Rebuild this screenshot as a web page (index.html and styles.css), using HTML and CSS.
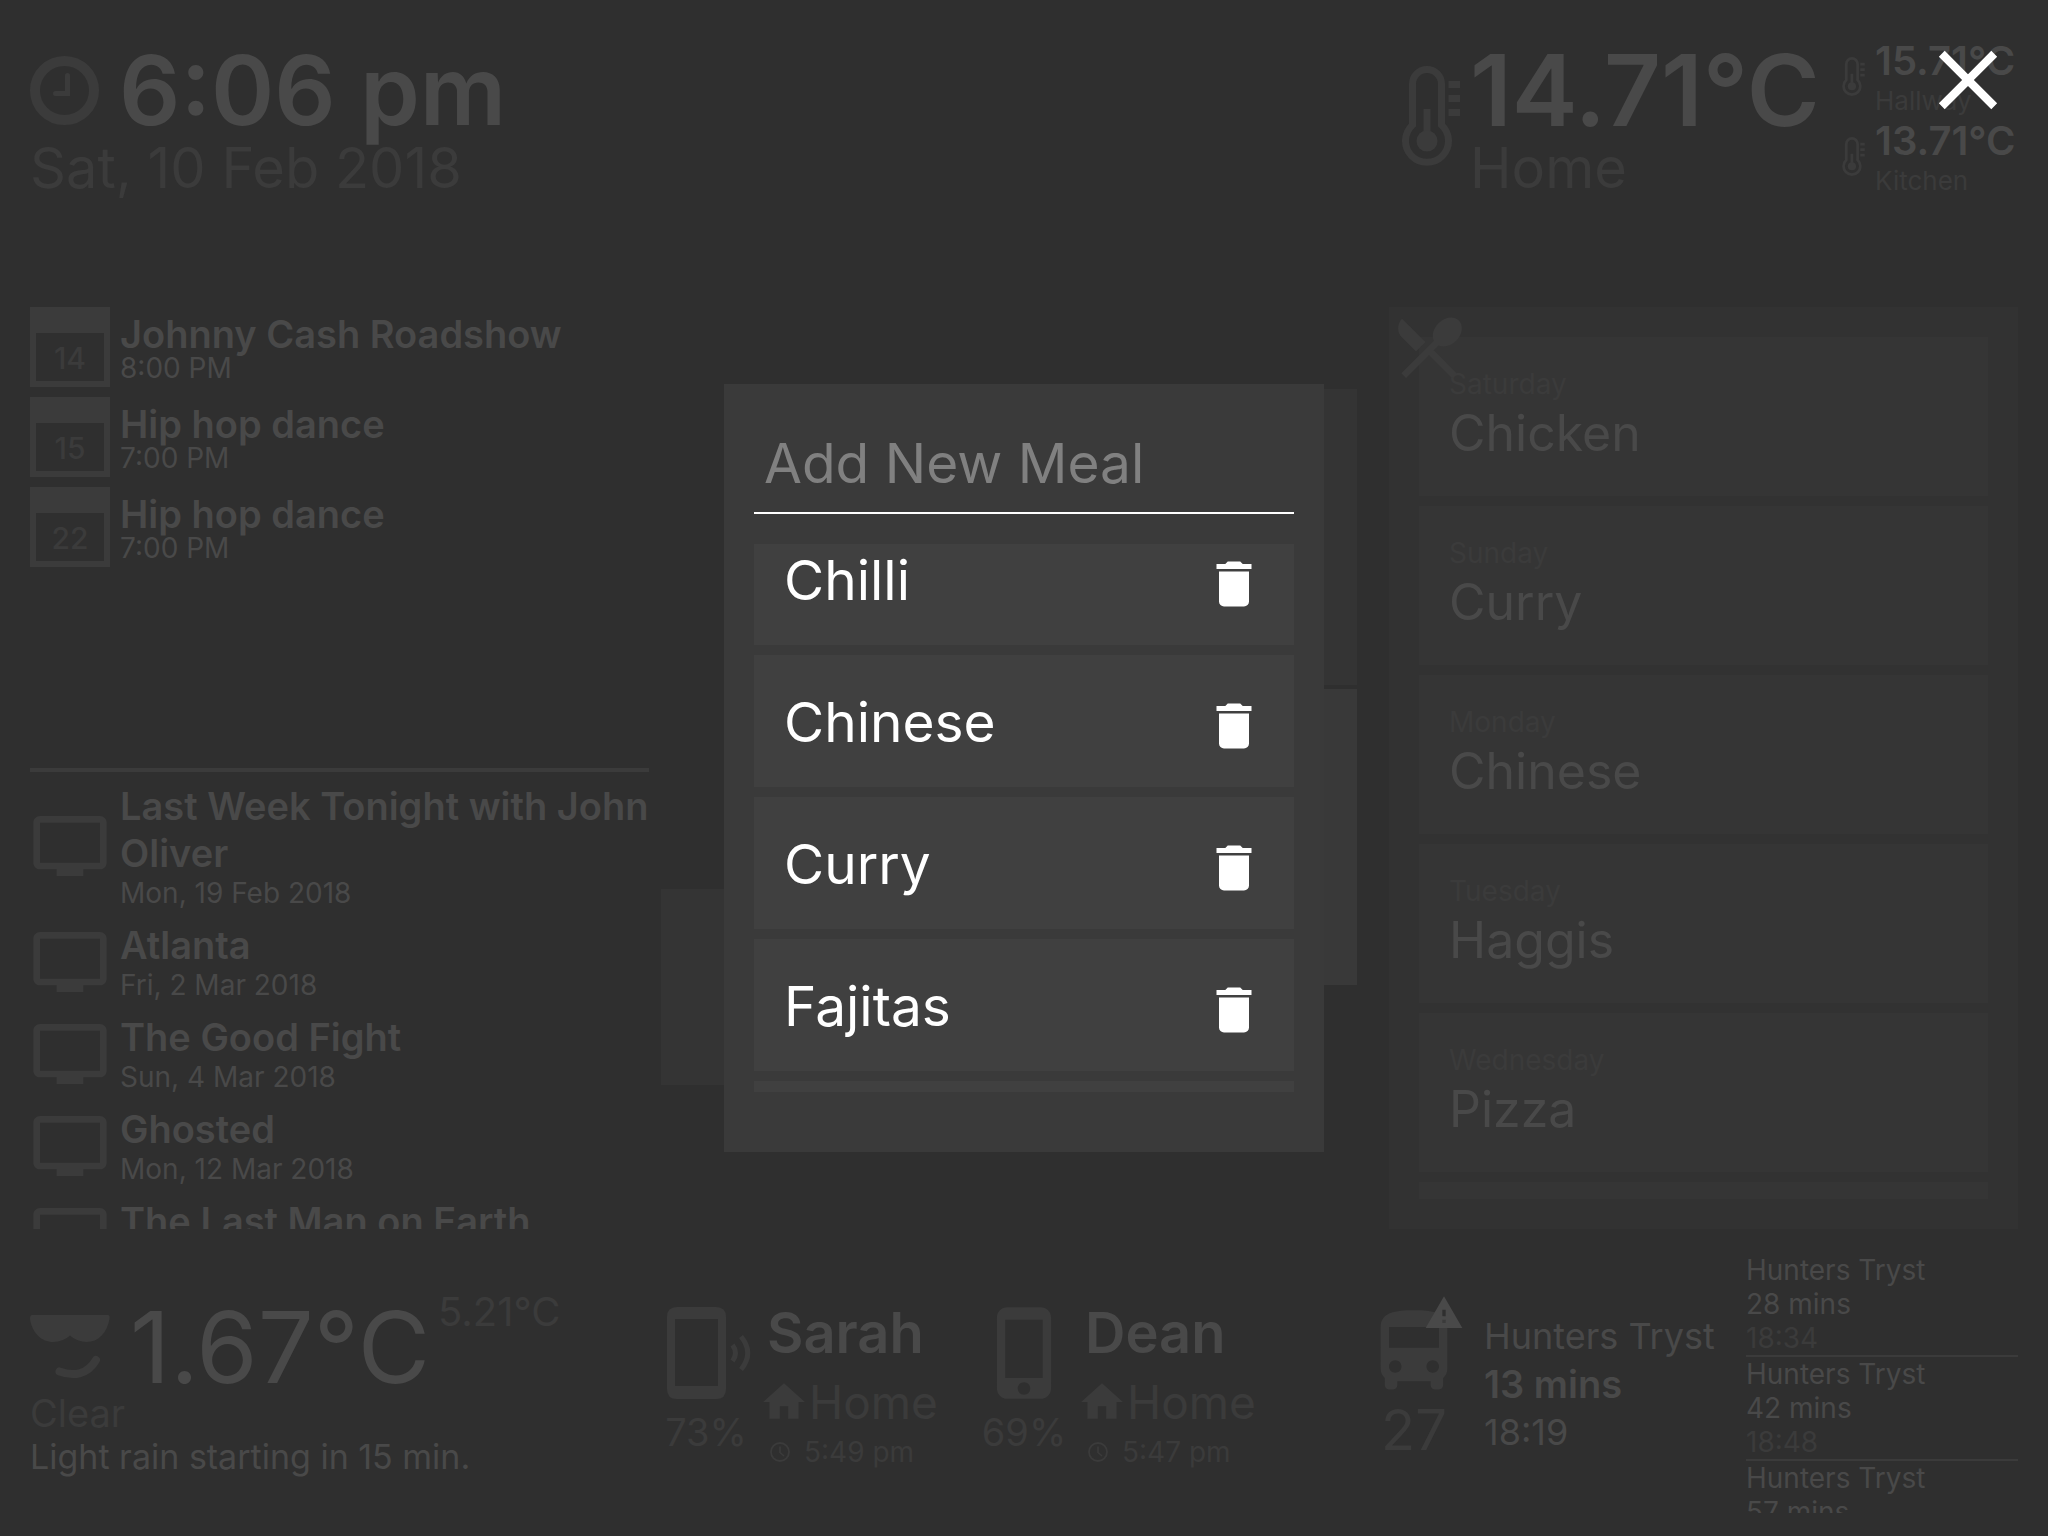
FILE: index.html
```html
<!DOCTYPE html>
<html lang="en">
<head>
<meta charset="utf-8">
<meta name="viewport" content="width=device-width, initial-scale=1">
<title>Home dashboard</title>
<link rel="stylesheet" href="styles.css">
</head>
<body>
<svg class="sprite" aria-hidden="true">
  <symbol id="thermometer" viewBox="0 0 58 100">
    <path d="M10.5 59V18a14.5 14.5 0 0 1 29 0V59A21.5 21.5 0 1 1 10.5 59Z" fill="none" stroke="currentColor" stroke-width="7"/>
    <path d="M21.500 43h7v24h-7z"/><circle cx="25" cy="75" r="10.500"/>
    <path d="M46.500 15H58v7H46.500zM46.500 29H58v7H46.500zM46.500 43H58v7H46.500z"/>
  </symbol>
  <symbol id="tv" viewBox="0 0 24 24"><path d="M21 3H3c-1.100 0-2 .9-2 2v12c0 1.100.9 2 2 2h5v2h8v-2h5c1.100 0 2-.9 2-2V5c0-1.100-.9-2-2-2zm0 14H3V5h18v12z"/></symbol>
  <symbol id="home" viewBox="0 0 24 24"><path d="M10 20v-6h4v6h5v-8h3L12 3 2 12h3v8z"/></symbol>
  <symbol id="clock-small" viewBox="0 0 24 24"><circle cx="12" cy="12" r="9" fill="none" stroke="currentColor" stroke-width="1.800"/><path d="M12 6.500V12.500L16 16" fill="none" stroke="currentColor" stroke-width="1.600"/></symbol>
  <symbol id="trash" viewBox="0 0 24 24"><path d="M19,4H15.500L14.500,3H9.500L8.500,4H5V6H19M6,19A2,2 0 0,0 8,21H16A2,2 0 0,0 18,19V7H6V19Z"/></symbol>
</svg>

<div class="dashboard">
  <header class="top">
    <section class="now">
      <div class="now-row">
        <svg class="icon now-icon" viewBox="0 0 69 69"><circle cx="34.500" cy="34.500" r="29.500" fill="none" stroke="currentColor" stroke-width="10"/><path d="M37.500 19.500V37.500H25.500" fill="none" stroke="currentColor" stroke-width="5" stroke-linecap="round"/></svg>
        <time class="huge strong">6:06 pm</time>
      </div>
      <div class="large dim">Sat, 10 Feb 2018</div>
    </section>
    <section class="climate">
      <div class="climate-main">
        <svg class="icon thermo"><use href="#thermometer"/></svg>
        <div class="climate-main-text">
          <div class="huge huge-temp strong">14.71°C</div>
          <div class="large dim">Home</div>
        </div>
      </div>
      <div class="climate-rooms">
        <div class="room"><svg class="icon thermo-small"><use href="#thermometer"/></svg><div><div class="room-value">15.71°C</div><div class="room-name">Hallway</div></div></div>
        <div class="room"><svg class="icon thermo-small"><use href="#thermometer"/></svg><div><div class="room-value">13.71°C</div><div class="room-name">Kitchen</div></div></div>
      </div>
    </section>
  </header>

  <main class="middle">
    <section class="agenda">
      <ul class="events">
        <li class="event"><span class="event-day">14</span><div class="event-text"><div class="title">Johnny Cash Roadshow</div><div class="event-time">8:00 PM</div></div></li>
        <li class="event"><span class="event-day">15</span><div class="event-text"><div class="title">Hip hop dance</div><div class="event-time">7:00 PM</div></div></li>
        <li class="event"><span class="event-day">22</span><div class="event-text"><div class="title">Hip hop dance</div><div class="event-time">7:00 PM</div></div></li>
      </ul>
      <ul class="shows">
        <li class="show"><svg class="icon show-icon"><use href="#tv"/></svg><div><div class="title">Last Week Tonight with John Oliver</div><div class="show-date">Mon, 19 Feb 2018</div></div></li>
        <li class="show"><svg class="icon show-icon"><use href="#tv"/></svg><div><div class="title">Atlanta</div><div class="show-date">Fri, 2 Mar 2018</div></div></li>
        <li class="show"><svg class="icon show-icon"><use href="#tv"/></svg><div><div class="title">The Good Fight</div><div class="show-date">Sun, 4 Mar 2018</div></div></li>
        <li class="show"><svg class="icon show-icon"><use href="#tv"/></svg><div><div class="title">Ghosted</div><div class="show-date">Mon, 12 Mar 2018</div></div></li>
        <li class="show"><svg class="icon show-icon"><use href="#tv"/></svg><div><div class="title">The Last Man on Earth</div><div class="show-date">Sun, 18 Mar 2018</div></div></li>
      </ul>
    </section>

    <section class="tiles">
      <div class="tile-column tile-column-left"><div class="tile tile-short"></div></div>
      <div class="tile-column"><div class="tile"></div><div class="tile tile-on"></div></div>
    </section>

    <section class="menu">
      <svg class="icon menu-icon" viewBox="0 0 24 24"><path d="M8.100 13.340l2.830-2.830L3.910 3.500c-1.560 1.560-1.560 4.090 0 5.660l4.190 4.180zm6.780-1.810c1.530.71 3.680.21 5.270-1.380 1.910-1.910 2.280-4.650.81-6.120-1.460-1.460-4.200-1.100-6.120.81-1.590 1.590-2.090 3.740-1.380 5.270L3.700 19.870l1.410 1.410L12 14.410l6.880 6.880 1.410-1.410L13.410 13l1.470-1.470z"/></svg>
      <ul class="meals">
        <li class="meal"><div class="meal-day">Saturday</div><div class="meal-name">Chicken</div></li>
        <li class="meal"><div class="meal-day">Sunday</div><div class="meal-name">Curry</div></li>
        <li class="meal"><div class="meal-day">Monday</div><div class="meal-name">Chinese</div></li>
        <li class="meal"><div class="meal-day">Tuesday</div><div class="meal-name">Haggis</div></li>
        <li class="meal"><div class="meal-day">Wednesday</div><div class="meal-name">Pizza</div></li>
        <li class="meal"></li>
      </ul>
    </section>
  </main>

  <footer class="bottom">
    <section class="weather">
      <div class="weather-row">
        <svg class="icon weather-icon" viewBox="0 0 80 64"><path d="M2 0H78Q80 0 79.500 4C77 18 68 27 57 27Q47 27 40 20.500Q33 27 23 27C12 27 2 18 0 4Q0 0 2 0Z"/><path d="M29.500 56.500C44 62 58 59 66 45" fill="none" stroke="currentColor" stroke-width="8" stroke-linecap="round"/></svg>
        <div class="huge huge-temp weather-temp">1.67°C</div>
        <div class="weather-feels">5.21°C</div>
      </div>
      <div class="weather-state">Clear</div>
      <div class="weather-note">Light rain starting in 15 min.</div>
    </section>

    <section class="people">
      <article class="person">
        <div class="person-device">
          <svg class="icon device" viewBox="0 0 100 100"><path fill-rule="evenodd" d="M21 4H60Q70 4 70 14V86Q70 96 60 96H21Q11 96 11 86V14Q11 4 21 4ZM19 16V83H62V16Z"/><path d="M76.500 42Q82.500 50 76.500 58M85 33.500Q98.500 50 85 66.500" fill="none" stroke="currentColor" stroke-width="5"/></svg>
          <div class="battery">73%</div>
        </div>
        <div class="person-text">
          <h2 class="person-name">Sarah</h2>
          <div class="person-place"><svg class="icon place-icon"><use href="#home"/></svg>Home</div>
          <div class="person-seen"><svg class="icon seen-icon"><use href="#clock-small"/></svg>5:49 pm</div>
        </div>
      </article>
      <article class="person">
        <div class="person-device">
          <svg class="icon device" viewBox="-.5 0 24 24"><path d="M15.500 1h-8C6.120 1 5 2.120 5 3.500v17C5 21.880 6.120 23 7.500 23h8c1.380 0 2.500-1.120 2.500-2.500v-17C18 2.120 16.880 1 15.500 1zm-4 21c-.83 0-1.500-.67-1.500-1.500s.67-1.500 1.500-1.500 1.500.67 1.500 1.500-.67 1.500-1.500 1.500zm4.500-4H7V4h9v14z"/></svg>
          <div class="battery">69%</div>
        </div>
        <div class="person-text">
          <h2 class="person-name">Dean</h2>
          <div class="person-place"><svg class="icon place-icon"><use href="#home"/></svg>Home</div>
          <div class="person-seen"><svg class="icon seen-icon"><use href="#clock-small"/></svg>5:47 pm</div>
        </div>
      </article>
    </section>

    <section class="transit">
      <div class="bus">
        <svg class="icon bus-icon" viewBox="0 0 24 24"><path d="M4 16c0 .88.39 1.670 1 2.220V20c0 .55.45 1 1 1h1c.55 0 1-.45 1-1v-1h8v1c0 .55.45 1 1 1h1c.55 0 1-.45 1-1v-1.780c.61-.55 1-1.340 1-2.220V6c0-3.500-3.580-4-8-4s-8 .5-8 4v10zm3.500 1c-.83 0-1.500-.67-1.500-1.500S6.670 14 7.500 14s1.500.67 1.500 1.500S8.330 17 7.500 17zm9 0c-.83 0-1.500-.67-1.500-1.500s.67-1.500 1.500-1.500 1.500.67 1.500 1.500-.67 1.500-1.500 1.500zm1.500-6H6V6h12v5z"/></svg>
        <svg class="icon bus-alert" viewBox="0 0 24 24"><path d="M1 21h22L12 2 1 21zm12-3h-2v-2h2v2zm0-4h-2v-4h2v4z"/></svg>
        <div class="bus-number">27</div>
      </div>
      <div class="next-bus">
        <div>Hunters Tryst</div>
        <div class="strong">13 mins</div>
        <div>18:19</div>
      </div>
      <ul class="departures">
        <li class="departure"><div>Hunters Tryst</div><div>28 mins</div><div class="dim">18:34</div></li>
        <li class="departure"><div>Hunters Tryst</div><div>42 mins</div><div class="dim">18:48</div></li>
        <li class="departure"><div>Hunters Tryst</div><div>57 mins</div><div class="dim">19:03</div></li>
      </ul>
    </section>
  </footer>
</div>

<div class="overlay">
  <button class="close" type="button" aria-label="Close"><svg class="icon" viewBox="0 0 24 24"><path d="M19,6.410L17.590,5L12,10.590L6.410,5L5,6.410L10.590,12L5,17.590L6.410,19L12,13.410L17.590,19L19,17.590L13.410,12L19,6.410Z"/></svg></button>
  <div class="modal" role="dialog" aria-label="Meals">
    <input class="new-meal" type="text" placeholder="Add New Meal" aria-label="Add New Meal">
    <ul class="options">
      <li class="option">Chilli<button class="delete" type="button" aria-label="Delete Chilli"><svg class="icon"><use href="#trash"/></svg></button></li>
      <li class="option">Chinese<button class="delete" type="button" aria-label="Delete Chinese"><svg class="icon"><use href="#trash"/></svg></button></li>
      <li class="option">Curry<button class="delete" type="button" aria-label="Delete Curry"><svg class="icon"><use href="#trash"/></svg></button></li>
      <li class="option">Fajitas<button class="delete" type="button" aria-label="Delete Fajitas"><svg class="icon"><use href="#trash"/></svg></button></li>
      <li class="option"></li>
    </ul>
  </div>
</div>
</body>
</html>
```
FILE: styles.css
```css
:root {
  --bg: #2f2f2f;
  --text: #494949;
  --dim: #3b3b3b;
}

* { box-sizing: border-box; }

body {
  margin: 0;
  background: var(--bg);
  color: var(--text);
  font-family: Inter, "Liberation Sans", sans-serif;
  font-size: 28px;
  line-height: 34px;
}

ul { margin: 0; padding: 0; list-style: none; }
button { border: 0; padding: 0; background: none; color: inherit; display: block; cursor: pointer; }

.sprite { position: absolute; width: 0; height: 0; }
.icon { display: block; flex: none; width: 100%; height: 100%; fill: currentColor; color: var(--dim); }

.dashboard {
  display: grid;
  grid-template-rows: minmax(0, 1fr) minmax(0, 3fr) minmax(0, 1fr);
  height: 100vh;
  padding: 0 30px;
}

.huge { font-size: 96px; line-height: 90px; white-space: nowrap; }
.huge-temp { font-size: 99px; }
.large { font-size: 56px; line-height: 66px; }
.strong { font-weight: 600; }
.dim { color: var(--dim); }
.title { font-size: 38px; line-height: 47px; font-weight: 600; }

/* Header */
.top { display: flex; justify-content: space-between; padding-top: 39px; }
.now { padding-top: 6px; }
.now-row { display: flex; gap: 20px; }
.now-icon { width: 69px; height: 69px; margin-top: 11px; }
.climate { display: flex; gap: 18px; }
.climate-main { display: flex; gap: 10px; padding-top: 6px; }
.climate-main-text { width: 354px; }
.thermo { width: 58px; height: 100px; margin-top: 21px; }
.room { display: flex; gap: 10px; }
.thermo-small { width: 23px; height: 39px; margin-top: 18px; }
.room-value { width: 143px; font-size: 40px; line-height: 44px; font-weight: 600; }
.room-name { font-size: 26px; line-height: 36px; color: var(--dim); }

/* Main area */
.middle { display: grid; grid-template-columns: 619fr 716fr 629fr; grid-template-rows: minmax(0, 1fr); gap: 12px; }
.agenda { display: grid; grid-template-rows: minmax(0, 1fr) minmax(0, 1fr); }
.events { display: flex; flex-direction: column; gap: 10px; }
.event { display: flex; gap: 10px; }
.event-day {
  width: 80px;
  height: 80px;
  border: 6px solid var(--dim);
  border-top-width: 26px;
  color: var(--dim);
  font-size: 30px;
  font-weight: 500;
  line-height: 50px;
  text-align: center;
}
.event-text { padding-top: 4px; }
.event-time { line-height: 20px; }
.shows { display: flex; flex-direction: column; gap: 12px; padding-top: 11px; border-top: 4px solid var(--dim); overflow: hidden; }
.show { display: flex; flex: none; align-items: center; gap: 10px; }
.show-icon { width: 80px; height: 80px; }
.show-date { line-height: 33px; }

.tiles { display: grid; grid-template-columns: 1fr 1fr; padding: 82px 20px 0 0; }
.tile-column { display: flex; flex-direction: column; gap: 4px; }
.tile-column-left { padding-top: 500px; }
.tile { height: 296px; background: #343434; }
.tile-short { height: 196px; }
.tile-on { background: #393939; }

.menu { position: relative; padding: 30px; background: #323232; }
.menu-icon { position: absolute; top: 0; left: 0; width: 80px; height: 80px; }
.meals { display: flex; flex-direction: column; gap: 10px; height: 100%; overflow: hidden; }
.meal { flex: none; min-height: 159px; padding: 30px; background: #353535; }
.meal-day { color: var(--dim); }
.meal-name { font-size: 50px; line-height: 65px; }

/* Footer */
.bottom { display: grid; grid-template-columns: 624fr 710fr 654fr; grid-template-rows: minmax(0, 1fr); padding: 24px 0 23px; }
.weather { padding-top: 39px; }
.weather-row { display: flex; }
.weather-icon { width: 80px; height: 64px; margin-top: 23px; }
.weather-temp { padding: 11px 8px 0 20px; line-height: 88px; }
.weather-feels { font-size: 40px; line-height: 40px; color: var(--dim); }
.weather-state { font-size: 38px; line-height: 44px; color: var(--dim); }
.weather-note { font-size: 34px; line-height: 44px; }

.people { display: flex; padding: 44px 0 0 2px; color: var(--dim); }
.person { display: flex; gap: 3px; width: 318px; }
.person-device { width: 100px; padding-top: 6px; text-align: center; }
.device { width: 100px; height: 100px; }
.battery { font-size: 38px; line-height: 58px; }
.person-text { display: flex; flex-direction: column; gap: 8px; }
.person-name { margin: 0; padding-left: 8px; font-size: 56px; line-height: 72px; font-weight: 600; color: var(--text); }
.person-place { display: flex; font-size: 46px; line-height: 50px; }
.place-icon { width: 50px; height: 50px; }
.person-seen { display: flex; align-items: center; gap: 12px; padding-left: 9px; }
.seen-icon { width: 24px; height: 24px; }

.transit { display: flex; }
.bus { position: relative; width: 100px; padding-top: 49px; }
.bus-icon { height: 100px; }
.bus-alert { position: absolute; top: 40px; right: 0; width: 40px; height: 40px; color: var(--text); }
.bus-number { font-size: 56px; line-height: 56px; color: var(--dim); text-align: center; }
.next-bus { padding: 59px 0 0 20px; font-size: 36px; line-height: 48px; white-space: nowrap; }
.next-bus .strong { font-size: 38px; }
.departures { width: 272px; margin-left: auto; overflow: hidden; }
.departure { border-bottom: 2px solid var(--dim); }

/* Meal picker */
.overlay { position: fixed; inset: 0; display: flex; align-items: center; justify-content: center; color: #fff; }
.overlay .icon { color: #fff; }
.close { position: absolute; top: 30px; right: 30px; width: 100px; height: 100px; }
.modal { display: flex; flex-direction: column; gap: 30px; width: 600px; height: 50vh; padding: 30px 30px 60px; background: #3a3a3a; }
.new-meal {
  width: 100%;
  height: 100px;
  padding: 0 10px;
  border: 0;
  border-bottom: 2px solid #fff;
  border-radius: 0;
  outline: 0;
  background: none;
  color: #fff;
  font: 400 55px Inter, "Liberation Sans", sans-serif;
}
.new-meal::placeholder { color: #808080; opacity: 1; }
.options { display: flex; flex: 1; flex-direction: column; gap: 10px; min-height: 0; overflow: hidden; }
.option { display: flex; flex: none; align-items: flex-end; justify-content: space-between; min-height: 132px; padding: 33px 30px 31px; background: #404040; font-size: 55px; line-height: 68px; }
.option:first-child { margin-top: -31px; }
.delete { width: 60px; height: 60px; }
```
